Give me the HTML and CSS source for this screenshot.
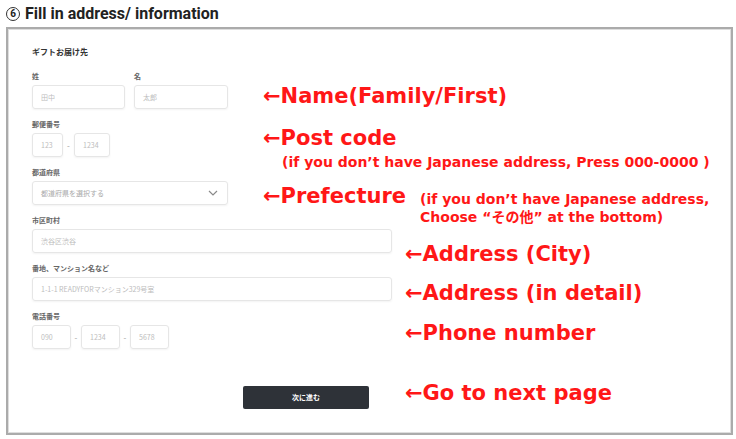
FILE: index.html
```html
<!DOCTYPE html>
<html lang="ja">
<head>
    <meta charset="utf-8">
    <title>Fill in address</title>
    <link rel="stylesheet" href="styles.css">
</head>
<body>
    <h2 class="heading"><span class="num">6</span>Fill in address/ information</h2>
    <div class="shot">
        <div class="form_title">ギフトお届け先</div>

        <div class="row">
            <div class="field narrow pair">
                <div class="group">
                    <div class="lbl">姓</div>
                    <div class="inp w_family">田中</div>
                </div>
                <div class="group">
                    <div class="lbl">名</div>
                    <div class="inp w_first">太郎</div>
                </div>
            </div>
            <div class="note note_name">←Name(Family/First)</div>
        </div>

        <div class="row">
            <div class="field narrow">
                <div class="lbl">郵便番号</div>
                <div class="line">
                    <div class="inp w_zip1">123</div>
                    <span class="dash dash_zip">-</span>
                    <div class="inp w_zip2">1234</div>
                </div>
            </div>
            <div class="note note_zip">
                <div>←Post code</div>
                <div class="sub">(if you don’t have Japanese address, Press 000-0000 )</div>
            </div>
        </div>

        <div class="row">
            <div class="field narrow">
                <div class="lbl">都道府県</div>
                <div class="inp select">
                    <span>都道府県を選択する</span>
                    <svg width="10" height="6" viewBox="0 0 10 6"><path d="M1 1 L5 5 L9 1" fill="none" stroke="#8a8a8a" stroke-width="1.2"/></svg>
                </div>
            </div>
            <div class="note note_pref">
                <span>←Prefecture</span>
                <div class="sub_block">
                    <div>(if you don’t have Japanese address,</div>
                    <div>Choose “その他” at the bottom)</div>
                </div>
            </div>
        </div>

        <div class="row">
            <div class="field wide">
                <div class="lbl">市区町村</div>
                <div class="inp">渋谷区渋谷</div>
            </div>
            <div class="note note_city">←Address (City)</div>
        </div>

        <div class="row">
            <div class="field wide">
                <div class="lbl">番地、マンション名など</div>
                <div class="inp">1-1-1 READYFORマンション329号室</div>
            </div>
            <div class="note note_detail">←Address (in detail)</div>
        </div>

        <div class="row">
            <div class="field wide">
                <div class="lbl">電話番号</div>
                <div class="line">
                    <div class="inp w_tel">090</div>
                    <span class="dash">-</span>
                    <div class="inp w_tel">1234</div>
                    <span class="dash">-</span>
                    <div class="inp w_tel">5678</div>
                </div>
            </div>
            <div class="note note_tel">←Phone number</div>
        </div>

        <div class="row row_btn">
            <div class="field wide">
                <button class="next">次に進む</button>
            </div>
            <div class="note note_btn">←Go to next page</div>
        </div>
    </div>
</body>
</html>
```

FILE: styles.css
```css
body {
    margin: 0;
    padding: 0 3px 0 6px;
    background-color: white;
    font-family: "Noto Sans CJK JP", sans-serif;
}
.heading {
    display: flex;
    align-items: center;
    height: 27px;
    margin: 0;
    font-family: Roboto, "Liberation Sans", sans-serif;
    font-size: 16px;
    font-weight: bold;
    color: #222;
}
.num {
    display: inline-flex;
    align-items: center;
    justify-content: center;
    box-sizing: border-box;
    width: 14px;
    height: 14px;
    border: 1.5px solid #333;
    border-radius: 50%;
    font-size: 10px;
    margin-right: 5px;
}
.shot {
    box-sizing: border-box;
    width: 727px;
    height: 408px;
    border: 2px solid #ababab;
    box-shadow: inset 0 0 0 1px #dedede;
    padding: 15px 0 0 24px;
}
.form_title {
    font-size: 8px;
    font-weight: bold;
    line-height: 16px;
    color: #333;
    margin-bottom: 9px;
}
.row {
    display: flex;
    align-items: flex-end;
    margin-bottom: 8px;
}
.field {
    flex: none;
}
.narrow {
    width: 196px;
}
.wide {
    width: 360px;
}
.pair {
    display: flex;
    gap: 9px;
}
.lbl {
    font-size: 7px;
    font-weight: bold;
    color: #666;
    line-height: 14px;
    margin-bottom: 2px;
}
.inp {
    box-sizing: border-box;
    height: 24px;
    border: 1px solid #e6e6e6;
    border-radius: 3px;
    box-shadow: 0 1px 2px rgba(0, 0, 0, 0.05);
    padding-left: 8px;
    display: flex;
    align-items: center;
    font-size: 7px;
    color: #bdbdbd;
}
.w_family {
    width: 93px;
}
.w_first {
    width: 94px;
}
.line {
    display: flex;
    align-items: center;
}
.w_zip1 {
    width: 31px;
}
.w_zip2 {
    width: 36px;
}
.w_tel {
    width: 39px;
}
.dash {
    width: 10px;
    text-align: center;
    font-size: 8px;
    color: #999;
}
.dash_zip {
    width: 11px;
}
.select {
    justify-content: space-between;
    padding-right: 9px;
    color: #aaa;
}
.row_btn {
    margin-top: 32px;
    align-items: center;
}
.next {
    margin-left: 211px;
    width: 126px;
    height: 23px;
    border: none;
    border-radius: 2px;
    background-color: #2e3238;
    color: white;
    font-family: "Noto Sans CJK JP", sans-serif;
    font-size: 7px;
    font-weight: bold;
}
.note {
    color: #ff1717;
    font-family: "DejaVu Sans", "Noto Sans CJK JP", sans-serif;
    font-weight: bold;
    font-size: 21px;
    line-height: 24px;
    white-space: nowrap;
}
.narrow + .note {
    margin-left: 35px;
}
.wide + .note {
    margin-left: 13px;
}
.note_name {
    margin-bottom: 1px;
}
.note_zip {
    align-self: flex-start;
    line-height: 22px;
    margin-top: 10px;
    margin-bottom: -14px;
}
.sub {
    font-size: 14px;
    line-height: 18px;
    margin-top: 4px;
    margin-left: 19px;
}
.note_pref {
    display: flex;
    align-self: flex-start;
    margin-top: 19px;
    margin-bottom: -21px;
}
.sub_block {
    font-size: 14px;
    line-height: 18px;
    margin-top: 6px;
    margin-left: 14px;
}
.note_city {
    margin-bottom: -13px;
}
.note_detail {
    margin-bottom: -4px;
}
.note_tel {
    margin-bottom: 4px;
}
.note_btn {
    margin-bottom: 4px;
}
```
